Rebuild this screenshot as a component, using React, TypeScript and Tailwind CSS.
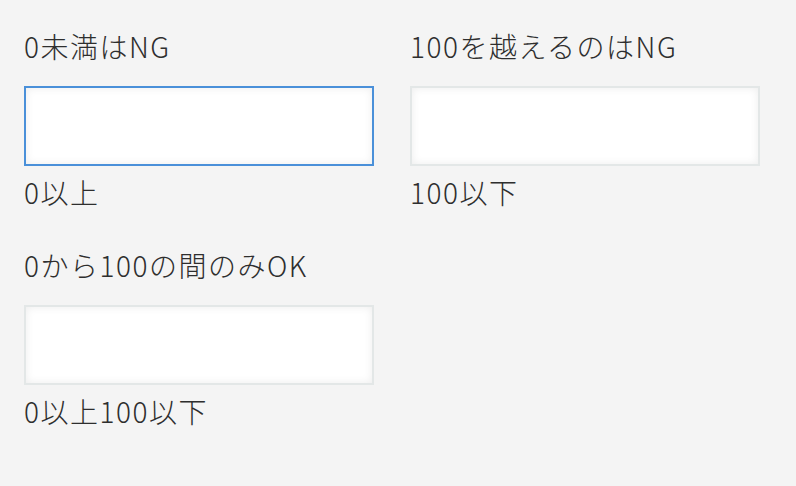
import React from "react";

const font = { fontFamily: '"Noto Sans CJK JP", "Noto Sans", sans-serif' };

function Field({ label, helper, focused }: { label: string; helper: string; focused?: boolean }) {
  return (
    <div className="flex flex-col">
      <div className="text-[28px] leading-[40px] tracking-[1.5px] font-light text-[#2e2e2e]">{label}</div>
      <input
        className={
          "mt-[20px] h-[80px] w-[350px] bg-white outline-none border-2 shadow-[inset_0_0_8px_rgba(0,0,0,0.08)] " +
          (focused ? "border-[#4a90d9]" : "border-[#e3e7e7]")
        }
      />
      <div className="mt-[6px] text-[28px] leading-[40px] tracking-[1.5px] font-light text-[#2e2e2e]">{helper}</div>
    </div>
  );
}

export default function App() {
  return (
    <div className="w-[796px] h-[486px] bg-[#f4f4f4] px-[24px] pt-[26px]" style={font}>
      <div className="grid grid-cols-[350px_350px] gap-x-[36px] gap-y-[33px]">
        <Field label="0未満はNG" helper="0以上" focused />
        <Field label="100を越えるのはNG" helper="100以下" />
        <Field label="0から100の間のみOK" helper="0以上100以下" />
      </div>
    </div>
  );
}
